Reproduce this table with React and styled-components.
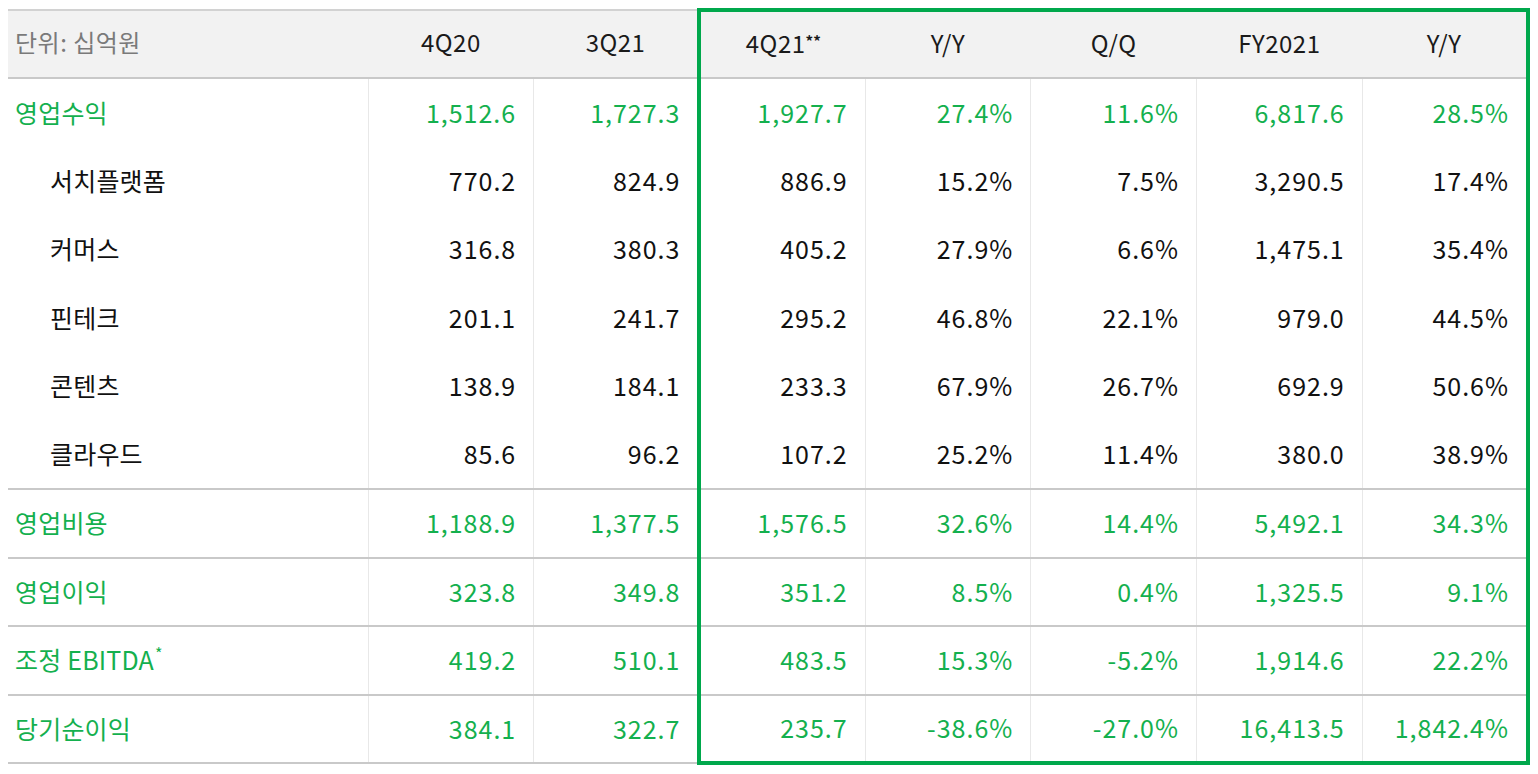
import React from 'react';
import styled, { createGlobalStyle } from 'styled-components';

const GlobalStyle = createGlobalStyle`
  body {
    margin: 8px;
    background: #ffffff;
    font-family: 'Noto Sans CJK KR', 'Noto Sans', sans-serif;
  }
`;

const GREEN = '#14b04e';
const FRAME = '#00a84c';

const Table = styled.table`
  width: 100%;
  border-collapse: collapse;
  table-layout: fixed;
  font-size: 25px;
  color: #111111;
`;

const HeadCell = styled.th`
  height: 60px;
  padding: 0 0 5px 0;
  background: #f2f2f2;
  border-top: 2px solid #d2d2d2;
  border-bottom: 2px solid #c9c9c9;
  font-weight: 400;
  font-size: 24px;
  text-align: center;
  color: #1a1a1a;
  letter-spacing: 0.5px;

  &.unit {
    text-align: left;
    padding-left: 7px;
    color: #7a7a7a;
  }
  &.frameStart {
    border-left: 4px solid ${FRAME};
  }
  &.frameTop {
    border-top: 4px solid ${FRAME};
  }
  &.frameEnd {
    border-right: 4px solid ${FRAME};
  }
`;

const Row = styled.tr`
  height: 68.5px;
  color: ${p => (p.$sub ? '#111111' : GREEN)};
  border-bottom: ${p => (p.$divider ? '2px solid #c9c9c9' : 'none')};
`;

const Label = styled.td`
  padding: 0 0 2px ${p => (p.$sub ? '42px' : '7px')};
  letter-spacing: 0.2px;
  white-space: nowrap;
`;

const Value = styled.td`
  padding: 0 17px 2px 0;
  text-align: right;
  border-left: 1px solid #e8e8e8;
  letter-spacing: 1px;
  white-space: nowrap;

  &.frameStart {
    border-left: 4px solid ${FRAME};
  }
  &.frameEnd {
    border-right: 4px solid ${FRAME};
  }
  &.frameBottom {
    border-bottom: 4px solid ${FRAME};
  }
`;

const Stars = styled.span`
  font-size: 15px;
  font-weight: 700;
  vertical-align: 6px;
  letter-spacing: 0;
`;

const Sup = styled.sup`
  font-size: 16px;
  vertical-align: 10px;
  line-height: 0;
  margin-left: 1px;
`;

const headers = ['4Q20', '3Q21', '4Q21', 'Y/Y', 'Q/Q', 'FY2021', 'Y/Y'];

const rows = [
  { label: '영업수익', values: ['1,512.6', '1,727.3', '1,927.7', '27.4%', '11.6%', '6,817.6', '28.5%'] },
  { label: '서치플랫폼', sub: true, values: ['770.2', '824.9', '886.9', '15.2%', '7.5%', '3,290.5', '17.4%'] },
  { label: '커머스', sub: true, values: ['316.8', '380.3', '405.2', '27.9%', '6.6%', '1,475.1', '35.4%'] },
  { label: '핀테크', sub: true, values: ['201.1', '241.7', '295.2', '46.8%', '22.1%', '979.0', '44.5%'] },
  { label: '콘텐츠', sub: true, values: ['138.9', '184.1', '233.3', '67.9%', '26.7%', '692.9', '50.6%'] },
  { label: '클라우드', sub: true, divider: true, values: ['85.6', '96.2', '107.2', '25.2%', '11.4%', '380.0', '38.9%'] },
  { label: '영업비용', divider: true, values: ['1,188.9', '1,377.5', '1,576.5', '32.6%', '14.4%', '5,492.1', '34.3%'] },
  { label: '영업이익', divider: true, values: ['323.8', '349.8', '351.2', '8.5%', '0.4%', '1,325.5', '9.1%'] },
  { label: '조정 EBITDA', mark: true, divider: true, values: ['419.2', '510.1', '483.5', '15.3%', '-5.2%', '1,914.6', '22.2%'] },
  { label: '당기순이익', divider: true, values: ['384.1', '322.7', '235.7', '-38.6%', '-27.0%', '16,413.5', '1,842.4%'] },
];

// the green frame wraps the 4Q21..FY Y/Y block
function frameClass(i, isLastRow) {
  const c = [];
  if (i === 2) c.push('frameStart');
  if (i === 6) c.push('frameEnd');
  if (isLastRow && i >= 2) c.push('frameBottom');
  return c.join(' ');
}

export default function App() {
  return (
    <>
      <GlobalStyle />
      <Table>
        <colgroup>
          <col style={{ width: '360px' }} />
          {headers.map((h, i) => <col key={i} />)}
        </colgroup>
        <thead>
          <tr>
            <HeadCell className="unit">단위: 십억원</HeadCell>
            {headers.map((h, i) => {
              const c = [];
              if (i >= 2) c.push('frameTop');
              if (i === 2) c.push('frameStart');
              if (i === 6) c.push('frameEnd');
              return (
                <HeadCell key={i} className={c.join(' ')}>
                  {h}
                  {i === 2 && <Stars>**</Stars>}
                </HeadCell>
              );
            })}
          </tr>
        </thead>
        <tbody>
          {rows.map((r, ri) => (
            <Row key={ri} $sub={r.sub} $divider={r.divider}>
              <Label $sub={r.sub}>
                {r.label}
                {r.mark && <Sup>*</Sup>}
              </Label>
              {r.values.map((v, i) => (
                <Value key={i} className={frameClass(i, ri === rows.length - 1)}>{v}</Value>
              ))}
            </Row>
          ))}
        </tbody>
      </Table>
    </>
  );
}
